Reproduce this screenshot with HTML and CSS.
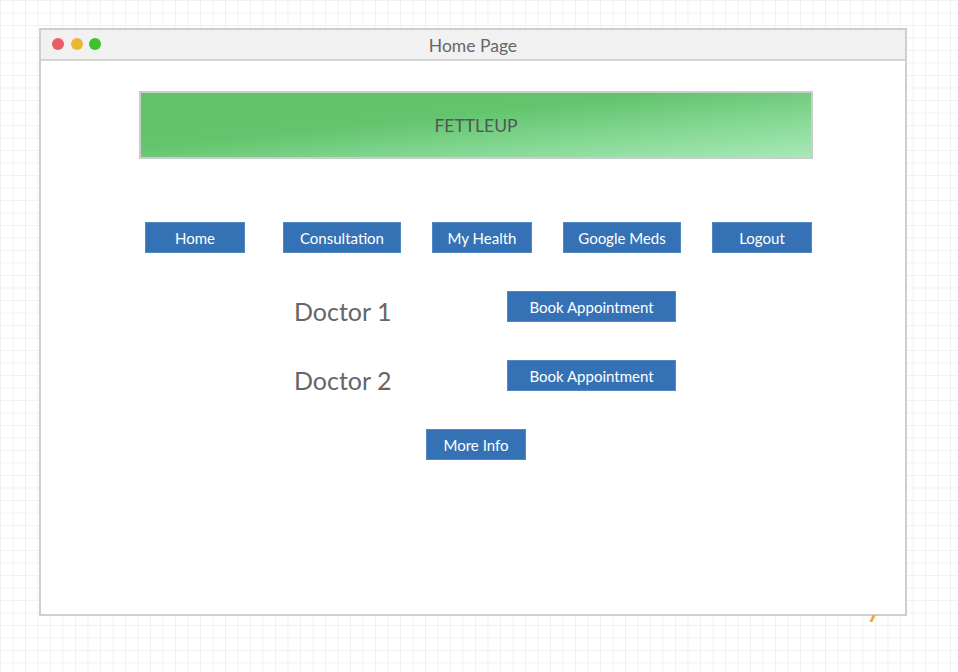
FILE: index.html
```html
<!DOCTYPE html>
<html>
<head>
<meta charset="utf-8">
<title>Home Page</title>
<link rel="stylesheet" href="styles.css">
</head>
<body>
<div class="window">
  <div class="titlebar">
    <div class="dots">
      <span class="dot red"></span>
      <span class="dot yellow"></span>
      <span class="dot green"></span>
    </div>
    <div class="title">Home Page</div>
  </div>
  <div class="content">
    <div class="banner">FETTLEUP</div>
    <nav class="nav">
      <span class="btn w99">Home</span>
      <span class="btn w117 gap-wide">Consultation</span>
      <span class="btn w99">My Health</span>
      <span class="btn w117">Google Meds</span>
      <span class="btn w99">Logout</span>
    </nav>
    <div class="doctors">
      <div class="doc-row">
        <span class="doc-name">Doctor 1</span>
        <span class="btn w168">Book Appointment</span>
      </div>
      <div class="doc-row">
        <span class="doc-name">Doctor 2</span>
        <span class="btn w168">Book Appointment</span>
      </div>
    </div>
    <div class="more">
      <span class="btn w99">More Info</span>
    </div>
  </div>
  <span class="mark"></span>
</div>
</body>
</html>
```

FILE: styles.css
```css
html, body {
  margin: 0;
  padding: 0;
}
body {
  width: 958px;
  height: 672px;
  overflow: hidden;
  background-color: #ffffff;
  background-image:
    linear-gradient(to right, #f1f1f1 1px, transparent 1px),
    linear-gradient(to bottom, #f1f1f1 1px, transparent 1px);
  background-size: 12.5px 12.5px;
  font-family: Lato, "Liberation Sans", sans-serif;
  padding-top: 28px;
  box-sizing: border-box;
}
.window {
  position: relative;
  margin-left: 39px;
  width: 868px;
  height: 588px;
  box-sizing: border-box;
  border: 2px solid #cfcfcf;
  background: #ffffff;
}
.titlebar {
  position: relative;
  height: 31px;
  box-sizing: border-box;
  background: #f1f1f1;
  border-bottom: 2px solid #d4d4d4;
  display: flex;
  align-items: center;
  justify-content: center;
}
.dots {
  position: absolute;
  left: 11px;
  top: 8px;
  display: flex;
  gap: 6.5px;
}
.dot {
  width: 12px;
  height: 12px;
  border-radius: 50%;
  display: block;
}
.red { background: #ec5d6a; }
.yellow { background: #ecb632; }
.green { background: #3ec12d; }
.title {
  font-size: 17.5px;
  color: #666666;
  padding-top: 1px;
}
.content {
  padding-top: 30px;
}
.banner {
  margin-left: 98px;
  width: 674px;
  height: 68px;
  box-sizing: border-box;
  border: 2px solid #cccccc;
  background: linear-gradient(174deg, #62c36b 0%, #62c46c 40%, #85d894 70%, #a8e8b8 100%);
  display: flex;
  align-items: center;
  justify-content: center;
  font-size: 17.5px;
  color: #555555;
}
.nav {
  display: flex;
  margin-top: 63px;
  padding-left: 104px;
  gap: 31px;
}
.gap-wide {
  margin-left: 7px;
}
.btn {
  display: flex;
  align-items: center;
  justify-content: center;
  height: 31px;
  box-sizing: border-box;
  background: #3572b5;
  border: 1px solid #5188c6;
  color: #ffffff;
  font-size: 15px;
  white-space: nowrap;
}
.w99 { width: 100px; }
.w117 { width: 118px; }
.w168 { width: 169px; }
.doctors {
  margin-top: 38px;
  display: flex;
  flex-direction: column;
  gap: 38px;
}
.doc-row {
  display: flex;
  align-items: flex-start;
  height: 31px;
  padding-left: 253px;
}
.doc-name {
  width: 213px;
  font-size: 25px;
  color: #666666;
  line-height: 31px;
  padding-top: 5px;
}
.more {
  margin-top: 38px;
  padding-left: 385px;
}
.mark {
  position: absolute;
  right: 31px;
  bottom: -8px;
  width: 3px;
  height: 7px;
  background: #f5a63a;
  transform: skewX(-25deg);
}
```
